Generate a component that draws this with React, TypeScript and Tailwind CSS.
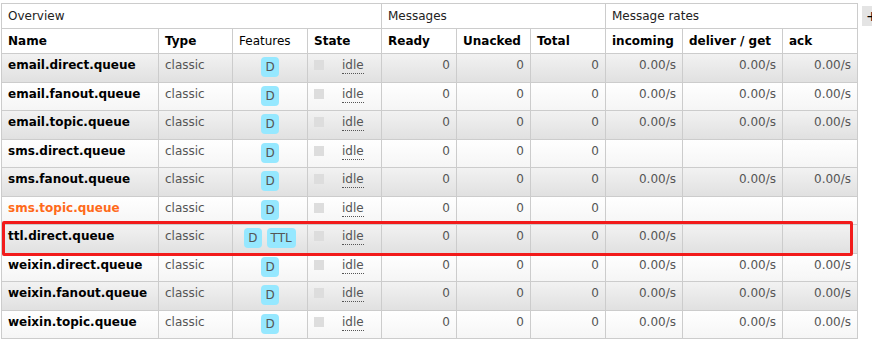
import React from "react";

type Row = {
  name: string;
  feats: string[];
  rates: string[];
  orange?: boolean;
};

const all = ["0.00/s", "0.00/s", "0.00/s"];

const rows: Row[] = [
  { name: "email.direct.queue", feats: ["D"], rates: all },
  { name: "email.fanout.queue", feats: ["D"], rates: all },
  { name: "email.topic.queue", feats: ["D"], rates: all },
  { name: "sms.direct.queue", feats: ["D"], rates: ["", "", ""] },
  { name: "sms.fanout.queue", feats: ["D"], rates: all },
  { name: "sms.topic.queue", feats: ["D"], rates: ["", "", ""], orange: true },
  { name: "ttl.direct.queue", feats: ["D", "TTL"], rates: ["0.00/s", "", ""] },
  { name: "weixin.direct.queue", feats: ["D"], rates: all },
  { name: "weixin.fanout.queue", feats: ["D"], rates: all },
  { name: "weixin.topic.queue", feats: ["D"], rates: all },
];

const th1 = "border border-[#cccccc] px-[6px] text-left font-normal text-[#222]";
const th2 = "border border-[#cccccc] px-[6px] text-left font-bold text-black";
const td = "border border-[#cccccc] px-[6px] pt-[3px] align-top";

function Badge({ label }: { label: string }) {
  return (
    <span className="inline-block rounded-[4px] bg-[#96e8ff] px-[4px] pt-[2px] pb-[1px] leading-[17px] text-[#555]">
      {label}
    </span>
  );
}

export default function App() {
  return (
    <div
      className="relative h-[344px] w-[872px] overflow-hidden bg-white text-[12px] leading-[16px]"
      style={{ fontFamily: '"DejaVu Sans", Verdana, sans-serif' }}
    >
      <div className="flex items-start pt-[3px] pl-px">
        <table className="w-[857px] table-fixed border-collapse">
          <colgroup>
            <col className="w-[157px]" />
            <col className="w-[74px]" />
            <col className="w-[75px]" />
            <col className="w-[74px]" />
            <col className="w-[75px]" />
            <col className="w-[74px]" />
            <col className="w-[75px]" />
            <col className="w-[77px]" />
            <col className="w-[100px]" />
            <col className="w-[75px]" />
          </colgroup>
          <thead>
            <tr className="h-[25px] bg-white">
              <th colSpan={4} className={th1}>Overview</th>
              <th colSpan={3} className={th1}>Messages</th>
              <th colSpan={3} className={th1}>Message rates</th>
            </tr>
            <tr className="h-[25px] bg-white">
              <th className={th2}>Name</th>
              <th className={th2}>Type</th>
              <th className="border border-[#cccccc] px-[6px] text-left font-normal text-black">Features</th>
              <th className={th2}>State</th>
              <th className={th2}>Ready</th>
              <th className={th2}>Unacked</th>
              <th className={th2}>Total</th>
              <th className={th2}>incoming</th>
              <th className={th2}>deliver / get</th>
              <th className={th2}>ack</th>
            </tr>
          </thead>
          <tbody>
            {rows.map((r, i) => (
              <tr
                key={r.name}
                className={
                  i % 2 === 0
                    ? "h-[28.5px] bg-gradient-to-b from-[#f2f2f2] to-[#e0e0e0]"
                    : "h-[28.5px] bg-gradient-to-b from-white to-[#f5f5f5]"
                }
              >
                <td className={td}>
                  <span className={r.orange ? "font-bold text-[#ff6a1a]" : "font-bold text-black"}>
                    {r.name}
                  </span>
                </td>
                <td className={td + " text-[#555]"}>classic</td>
                <td className="border border-[#cccccc] px-[6px] pt-[3px] align-top text-center">
                  <span className="inline-flex gap-[5px]">
                    {r.feats.map((f) => (
                      <Badge key={f} label={f} />
                    ))}
                  </span>
                </td>
                <td className={td}>
                  <div className="flex items-start gap-[18px]">
                    <span className="mt-[3px] block h-[10px] w-[10px] bg-[#dddddd]" />
                    <span className="border-b border-dotted border-[#555] text-[#555]">idle</span>
                  </div>
                </td>
                <td className={td + " text-right text-[#555]"}>0</td>
                <td className={td + " text-right text-[#555]"}>0</td>
                <td className={td + " text-right text-[#555]"}>0</td>
                {r.rates.map((v, j) => (
                  <td key={j} className={td + " text-right text-[#555]"}>
                    {v}
                  </td>
                ))}
              </tr>
            ))}
          </tbody>
        </table>
        <div className="ml-[4px] mt-[3px] flex h-[20px] w-[20px] shrink-0 items-center pl-[4px] bg-[#e4e4e4] text-[14px] text-black">
          +
        </div>
      </div>
      <div className="absolute left-[2px] top-[221px] h-[35px] w-[851px] rounded-[2px] border-[3px] border-[#f21b1b]" />
    </div>
  );
}
